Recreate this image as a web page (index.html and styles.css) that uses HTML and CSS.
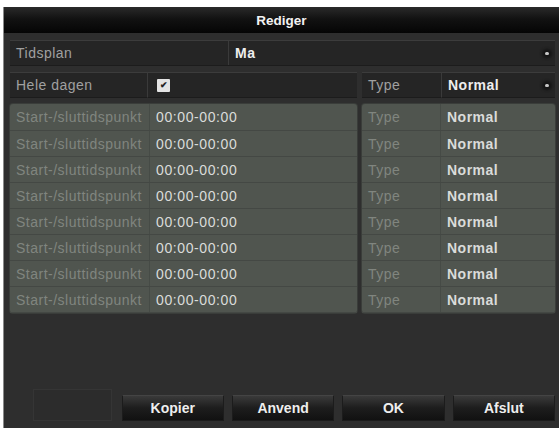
FILE: index.html
```html
<!DOCTYPE html>
<html lang="da">
<head>
    <meta charset="UTF-8">
    <meta name="viewport" content="width=device-width, initial-scale=1.0">
    <title>Rediger</title>
    <link rel="stylesheet" href="styles.css">
</head>
<body>
    <div class="window">
        <div class="titlebar">Rediger</div>
        <div class="content">
            <div class="field-row schedule">
                <div class="cell label wide">Tidsplan</div>
                <div class="cell value select">Ma<span class="arrow"></span></div>
            </div>
            <div class="field-row allday">
                <div class="cell label">Hele dagen</div>
                <div class="cell value check-cell"><span class="checkbox">&#10004;</span></div>
                <div class="cell label type">Type</div>
                <div class="cell value select type-val">Normal<span class="arrow"></span></div>
            </div>
            <div class="periods">
                <div class="period-list left">
                    <div class="period"><span class="p-label">Start-/sluttidspunkt</span><span class="p-value">00:00-00:00</span></div>
                    <div class="period"><span class="p-label">Start-/sluttidspunkt</span><span class="p-value">00:00-00:00</span></div>
                    <div class="period"><span class="p-label">Start-/sluttidspunkt</span><span class="p-value">00:00-00:00</span></div>
                    <div class="period"><span class="p-label">Start-/sluttidspunkt</span><span class="p-value">00:00-00:00</span></div>
                    <div class="period"><span class="p-label">Start-/sluttidspunkt</span><span class="p-value">00:00-00:00</span></div>
                    <div class="period"><span class="p-label">Start-/sluttidspunkt</span><span class="p-value">00:00-00:00</span></div>
                    <div class="period"><span class="p-label">Start-/sluttidspunkt</span><span class="p-value">00:00-00:00</span></div>
                    <div class="period"><span class="p-label">Start-/sluttidspunkt</span><span class="p-value">00:00-00:00</span></div>
                </div>
                <div class="period-list right">
                    <div class="period"><span class="p-label t">Type</span><span class="p-value">Normal</span></div>
                    <div class="period"><span class="p-label t">Type</span><span class="p-value">Normal</span></div>
                    <div class="period"><span class="p-label t">Type</span><span class="p-value">Normal</span></div>
                    <div class="period"><span class="p-label t">Type</span><span class="p-value">Normal</span></div>
                    <div class="period"><span class="p-label t">Type</span><span class="p-value">Normal</span></div>
                    <div class="period"><span class="p-label t">Type</span><span class="p-value">Normal</span></div>
                    <div class="period"><span class="p-label t">Type</span><span class="p-value">Normal</span></div>
                    <div class="period"><span class="p-label t">Type</span><span class="p-value">Normal</span></div>
                </div>
            </div>
            <div class="buttons">
                <div class="btn-ghost"></div>
                <button class="btn">Kopier</button>
                <button class="btn">Anvend</button>
                <button class="btn">OK</button>
                <button class="btn">Afslut</button>
            </div>
        </div>
    </div>
</body>
</html>
```
FILE: styles.css
```css
html{
    font-family: "Liberation Sans", Arial, sans-serif;
    color: #ddd;
}
body{
    margin: 0;
    background: #fff;
}
.window{
    margin: 7px 0 0 3px;
    width: 556px;
    height: 421px;
    background: #2e2e2e;
    border-left: 1px solid #8a8a8a;
    box-sizing: border-box;
    display: flex;
    flex-direction: column;
}
.titlebar{
    height: 26px;
    background: linear-gradient(#2a2a2a 0%, #121212 45%, #050505 100%);
    color: #f2f2f2;
    font-weight: bold;
    font-size: 13.5px;
    display: flex;
    align-items: center;
    justify-content: center;
}
.content{
    flex: 1;
    padding: 7px 4px 0 6px;
    display: flex;
    flex-direction: column;
}
.field-row{
    display: flex;
    background: #252525;
    border-top: 1px solid #3c3c3c;
    border-bottom: 1px solid #1c1c1c;
}
.schedule{
    height: 24px;
}
.allday{
    height: 26px;
    margin-top: 6px;
    background: transparent;
    border: none;
}
.cell{
    display: flex;
    align-items: center;
    font-size: 14px;
    letter-spacing: .5px;
    box-sizing: border-box;
}
.label{
    color: #a0a0a0;
    padding-left: 6px;
}
.value{
    color: #eee;
    font-weight: bold;
    padding-left: 6px;
    position: relative;
}
.schedule .wide{
    width: 219px;
    border-right: 1px solid #3a3a3a;
}
.schedule .value{
    flex: 1;
}
.allday .cell{
    background: #252525;
    border-top: 1px solid #3c3c3c;
    border-bottom: 1px solid #1c1c1c;
}
.allday .label{
    width: 138px;
    border-right: 1px solid #3a3a3a;
}
.allday .check-cell{
    width: 209px;
    padding-left: 9px;
}
.allday .type{
    width: 80px;
    margin-left: 5px;
    border-right: 1px solid #3a3a3a;
}
.allday .type-val{
    flex: 1;
}
.checkbox{
    width: 13px;
    height: 13px;
    background: #e4e4e4;
    color: #222;
    font-size: 9px;
    letter-spacing: 0;
    display: flex;
    align-items: center;
    justify-content: center;
    border-radius: 1px;
}
.arrow{
    position: absolute;
    right: 6px;
    top: 50%;
    width: 4px;
    height: 3px;
    margin-top: -1px;
    background: #c8c8c8;
    border-radius: 2px;
    box-shadow: 0 0 3px 3px #151515;
}
.periods{
    display: flex;
    margin-top: 6px;
    gap: 5px;
}
.period-list{
    display: flex;
    flex-direction: column;
    background: #50554f;
    border-radius: 3px;
    box-shadow: 0 0 0 1px #3a3d3a;
}
.period-list.left{
    width: 347px;
}
.period-list.right{
    flex: 1;
}
.period{
    height: 26px;
    display: flex;
    align-items: center;
    font-size: 14px;
    letter-spacing: .5px;
    border-bottom: 1px solid #444844;
    box-sizing: border-box;
}
.period:first-child{
    height: 27px;
}
.p-label{
    width: 140px;
    height: 100%;
    display: flex;
    align-items: center;
    padding-left: 6px;
    box-sizing: border-box;
    color: #80857f;
    border-right: 1px solid #464b46;
    white-space: nowrap;
    overflow: hidden;
    letter-spacing: .5px;
}
.p-label.t{
    width: 79px;
}
.p-value{
    padding-left: 6px;
    color: #dadcda;
    font-weight: bold;
}
.left .p-value{
    font-weight: normal;
    letter-spacing: .6px;
}
.buttons{
    margin-top: auto;
    margin-bottom: 7px;
    display: flex;
    align-items: center;
    gap: 8px;
}
.btn-ghost{
    width: 77px;
    height: 30px;
    margin-left: 23px;
    margin-right: 2px;
    margin-top: -6px;
    border: 1px solid #353535;
    background: #2c2c2c;
}
.btn{
    width: 103px;
    height: 26px;
    border: 1px solid #1c1c1c;
    border-top-color: #444;
    background: linear-gradient(#3a3a3a 0%, #1d1d1d 50%, #111 100%);
    color: #eee;
    font-family: "Liberation Sans", Arial, sans-serif;
    font-weight: bold;
    font-size: 14px;
    padding: 0;
}
```
